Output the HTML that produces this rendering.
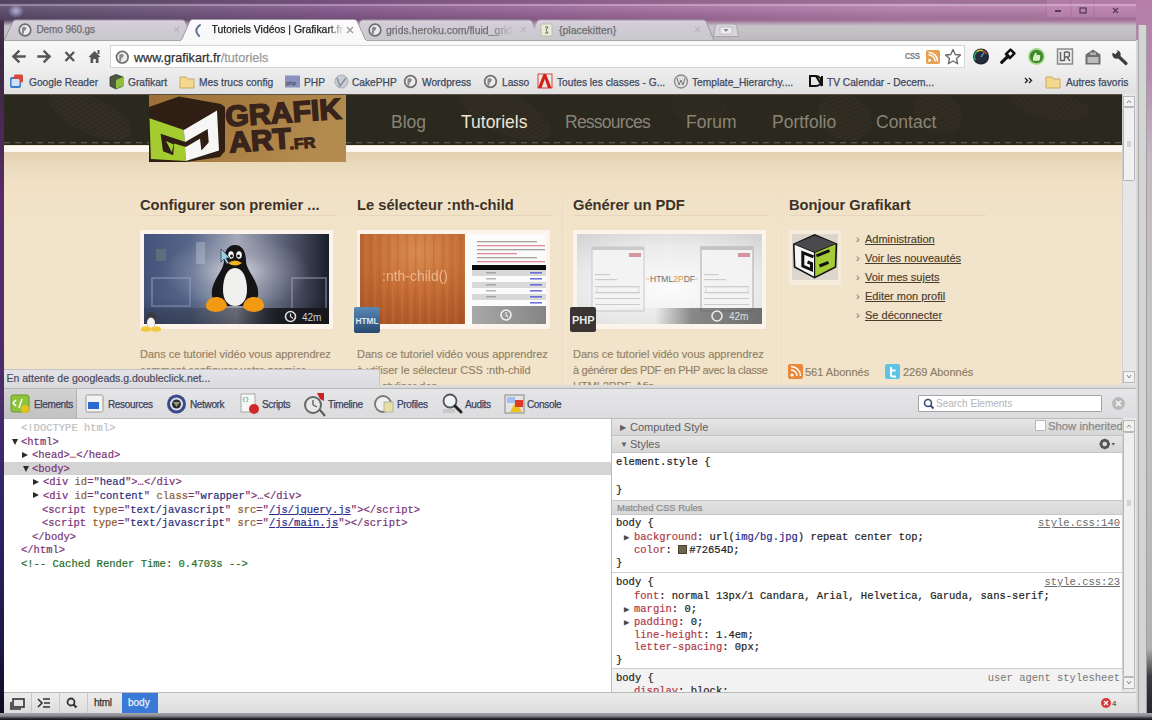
<!DOCTYPE html>
<html><head><meta charset="utf-8">
<style>
*{box-sizing:border-box;margin:0;padding:0}
html,body{width:1152px;height:720px;overflow:hidden;background:#6a4a72;font-family:"Liberation Sans",sans-serif}
.a{position:absolute}
#frame{left:0;top:0;width:1152px;height:720px;background:linear-gradient(180deg,rgba(0,0,0,.1) 0,rgba(0,0,0,.1) 3px,rgba(255,255,255,.1) 5px,rgba(255,255,255,.04) 9px,rgba(0,0,0,.1) 18px,rgba(0,0,0,.1) 20px),linear-gradient(90deg,#5c4c6c 0%,#6a5478 12%,#82588a 28%,#a06c9c 55%,#b27eaa 78%,#b47ea8 100%)}
#topline{left:0;top:4px;width:1152px;height:1.5px;background:rgba(255,240,255,.28)}
#tabstrip{left:4px;top:20px;width:1132px;height:20px;background:linear-gradient(180deg,rgba(200,190,200,0) 0%,#c9c3c9 30%,#c4c2c4 60%,#bbb9bb 100%)}
.tab{height:21px;top:19px;background:linear-gradient(#d8d6dc,#c9c7cd);border:1px solid #a8a2a8;border-bottom:none;border-radius:4px 4px 0 0;font-size:11px;color:#555;}
#toolbar{left:4px;top:40px;width:1132px;height:28px;background:linear-gradient(#fbfbfb,#f1f1f1);border-top:1px solid #bdbdbd}
#bookmarks{left:4px;top:68px;width:1132px;height:26px;background:linear-gradient(#f1f1f1,#e9e9e9)}
#page{left:4px;top:94px;width:1118px;height:291px;background:#f2e4ca;overflow:hidden}
#pscroll{left:1122px;top:94px;width:14px;height:294px;background:#ededed;border-left:1px solid #d0d0d0}
#rframe{display:none}
#status{z-index:5;left:4px;top:369px;width:376px;height:17px;background:linear-gradient(#e4e4e8,#dcdce0);border:1px solid #c4c4c8;border-left:none;border-bottom:none;font-size:10.5px;line-height:12px;color:#4a4a58;padding:2px 0 0 2.5px;white-space:nowrap;-webkit-text-stroke:0.2px currentColor}
#dtbar{left:4px;top:385px;width:1132px;height:33px;background:linear-gradient(#dedede 0,#d8d8d8 3px,#b8b8b8 3px,#b8b8b8 4px,#e6e6e8 4px,#dcdcde 100%)}
#elements{left:4px;top:418px;width:607px;height:274px;background:#fff;border-top:1px solid #bcbcbc}
#sidebar{left:611px;top:418px;width:511px;height:274px;background:#fff;border-left:1px solid #bcbcbc;border-top:1px solid #bcbcbc}
#dscroll{left:1122px;top:418px;width:14px;height:274px;background:#ececec;border-left:1px solid #cfcfcf}
#dstatus{left:4px;top:692px;width:1132px;height:22px;background:linear-gradient(#ececec,#dcdcdc);border-top:1px solid #b8b8b8}
#bottom{left:0;top:713px;width:1152px;height:7px;background:linear-gradient(#a4a4aa 0,#8a8a92 3px,#3a3a40 5px,#0e0e14 7px)}
.ui{white-space:nowrap;line-height:1;-webkit-text-stroke:0.25px currentColor}
.bm{top:77.5px;font-size:10.2px;color:#3e4862}
.nav{top:112.3px;font-size:17.5px;line-height:20px;color:#8a8478;white-space:nowrap}
.h2{top:196px;font-size:14.7px;line-height:18px;font-weight:bold;color:#3c3228;white-space:nowrap}
.uline{top:215px;height:1px;background:#e6d6be}
.frame{top:230px;width:193px;height:99px;background:#fcf4ea;box-shadow:0 0 1px #e8dcc8}
.ptxt{top:345.5px;font-size:11px;line-height:16px;color:#918066;white-space:nowrap;-webkit-text-stroke:0.15px currentColor}
.slink{left:856px;font-size:11px;line-height:14px;color:#4a3c2c;white-space:nowrap;-webkit-text-stroke:0.15px currentColor}
.slink::before{content:"›";position:absolute;left:0;color:#8a7c6c}
.slink{padding-left:9px;text-decoration:underline}
.dtl{top:399px;font-size:10px;line-height:12px;color:#3a4262;white-space:nowrap;letter-spacing:-0.35px;-webkit-text-stroke:0.25px currentColor}
.el{line-height:13px;color:#7a3276;-webkit-text-stroke:0.2px currentColor}
.tri{display:inline-block;width:11px;height:8px;position:relative;vertical-align:0}.tri::after{content:"";position:absolute;width:0;height:0}.td::after{left:1.6px;top:2px;border-left:3.4px solid transparent;border-right:3.4px solid transparent;border-top:6.4px solid #2a2a2a}.tr::after{left:1.2px;top:1.6px;border-top:3.4px solid transparent;border-bottom:3.4px solid transparent;border-left:6px solid #2a2a2a}
.tg{color:#7a3276}.an{color:#8e5a2c}.av{color:#2c2c7a}.lk{color:#2c2c8a;text-decoration:underline}
.shdr{left:612px;width:510px;height:17px;background:linear-gradient(#e6e6e6,#d6d6d6);border-bottom:1px solid #c4c4c4;font-size:11px;line-height:16px;color:#606060;padding-left:8px;white-space:nowrap}
.stri{font-size:8px;color:#606060;display:inline-block;width:10px;vertical-align:1px}
.stri2{font-size:8.5px;color:#444;display:inline-block;width:10px;vertical-align:0px}
.sl{left:616px;line-height:13px;color:#222;-webkit-text-stroke:0.2px currentColor}
.sl2{line-height:13px}
.pn{color:#b03a48}
.mono{font-family:"Liberation Mono",monospace;font-size:10.5px;white-space:pre}
#wrap{position:absolute;left:0;top:0;width:1152px;height:720px}</style></head><body><div id="wrap">
<div id="frame" class="a"></div>
<div class="a" style="left:0;top:20px;width:4px;height:700px;background:linear-gradient(180deg,#4a3050 0,#3a2840 30px,#582c68 180px,#4a2c6a 380px,#2c2462 500px,#1c1a48 620px,#0a0a20 700px)"></div>
<div class="a" style="left:4px;top:40px;width:1px;height:674px;background:rgba(255,245,250,.7)"></div>
<svg class="a" style="left:1040px;top:0" width="112" height="20">
 <rect x="6.5" y="-1" width="90" height="18.5" fill="#c48ab8" opacity="0.45" stroke="#9a6090" stroke-opacity="0.5"/>
 <line x1="31" y1="0" x2="31" y2="17" stroke="#a06a98" stroke-opacity="0.5"/>
 <line x1="54" y1="0" x2="54" y2="17" stroke="#a06a98" stroke-opacity="0.5"/>
 <rect x="15" y="10" width="6" height="2" fill="#5a3a58"/>
 <rect x="40" y="8" width="6" height="5" fill="none" stroke="#5a3a58" stroke-width="1.3"/>
 <path d="M73,8 L78,13 M78,8 L73,13" stroke="#5a3a58" stroke-width="1.4"/>
 <line x1="99.5" y1="0" x2="99.5" y2="40" stroke="#e0b0d8" stroke-opacity="0.5"/>
</svg>
<div id="topline" class="a"></div>
<div class="a" style="left:8px;top:4px;width:16px;height:14px;background:radial-gradient(ellipse at center,rgba(200,210,240,.75) 0,rgba(180,190,230,.35) 45%,rgba(180,190,230,0) 70%)"></div>
<div id="tabstrip" class="a"></div>
<svg class="a" style="left:0;top:0" width="1152" height="94" viewBox="0 0 1152 94">
 <defs>
  <linearGradient id="tinact" x1="0" y1="0" x2="0" y2="1"><stop offset="0" stop-color="#dcd2e0"/><stop offset="0.25" stop-color="#d2ccd6"/><stop offset="1" stop-color="#c8c8cc"/></linearGradient>
  <linearGradient id="tact" x1="0" y1="0" x2="0" y2="1"><stop offset="0" stop-color="#fdfafd"/><stop offset="1" stop-color="#f8f8f8"/></linearGradient>
  <linearGradient id="strip" x1="0" y1="0" x2="0" y2="1"><stop offset="0" stop-color="#000" stop-opacity="0"/><stop offset="1" stop-color="#cfcdd0" stop-opacity="0.0"/></linearGradient>
 </defs>
 <!-- tab 4 -->
 <path d="M529,40.5 L537,21.5 Q538,20 540,20 L703,20 Q705,20 706,21.5 L714,40.5 Z" fill="url(#tinact)" stroke="#9c98a0" stroke-width="1"/>
 <!-- tab 3 -->
 <path d="M352,40.5 L360,21.5 Q361,20 363,20 L529,20 Q531,20 532,21.5 L540,40.5 Z" fill="url(#tinact)" stroke="#9c98a0" stroke-width="1"/>
 <path d="M529.5,40 L537.5,21.5 Q538.5,20.5 540,20.5 L560,20.5 L560,40 Z" fill="url(#tinact)"/>
 <!-- tab 1 -->
 <path d="M4,40.5 L13,21.5 Q14,20 16,20 L182,20 Q184,20 185,21.5 L194,40.5 Z" fill="url(#tinact)" stroke="#9c98a0" stroke-width="1"/>
 <!-- new tab -->
 <path d="M713.5,36.5 L715.5,25.5 Q716,24 718,24 L734,24 Q736,24 736.5,25.5 L738.5,36.5 Z" fill="#d8d6da" stroke="#a8a4aa" stroke-width="1"/>
 <rect x="720" y="27" width="12" height="7" rx="1" fill="#ecebee" stroke="#b8b4ba" stroke-width="0.8"/>
 <path d="M723.5,29 L728.5,29 L726,32 Z" fill="#8a8a8e"/>
 <!-- active tab -->
 <path d="M181,41 L190,21 Q191,19.5 193,19.5 L354,19.5 Q356,19.5 357,21 L366,41 Z" fill="url(#tact)" stroke="#a09aa2" stroke-width="1"/>
 <!-- toolbar -->
 <rect x="4" y="40" width="1132" height="54" fill="url(#bmg)"/>
 <linearGradient id="bmg" x1="0" y1="0" x2="0" y2="1"><stop offset="0" stop-color="#f8f8f8"/><stop offset="0.5" stop-color="#efefef"/><stop offset="1" stop-color="#e0e0e0"/></linearGradient>
 <line x1="4" y1="40.5" x2="181" y2="40.5" stroke="#a8a6aa"/>
 <line x1="366" y1="40.5" x2="1136" y2="40.5" stroke="#a8a6aa"/>
 
 <linearGradient id="tb" x1="0" y1="0" x2="0" y2="1"><stop offset="0" stop-color="#fbfbfb"/><stop offset="1" stop-color="#f1f1f1"/></linearGradient>
 <rect x="182" y="40" width="183" height="2" fill="#fbfbfb"/>
 <!-- favicons tabs -->
 <circle cx="25" cy="30" r="5.8" fill="#ececec" stroke="#6e6e6e" stroke-width="1.7"/><path d="M22,27.5 q2.5,-1.5 4.5,0.5 q-0.5,2.5 -2.5,3 q0.5,2 -1,3.5 q-2,-1.5 -1,-4 z" fill="#8a8a8a"/>
 <path d="M200,25 Q193,30 199,36" fill="none" stroke="#5a7090" stroke-width="2" stroke-linecap="round"/>
 <circle cx="375" cy="30" r="5.8" fill="#ececec" stroke="#6e6e6e" stroke-width="1.7"/><path d="M372,27.5 q2.5,-1.5 4.5,0.5 q-0.5,2.5 -2.5,3 q0.5,2 -1,3.5 q-2,-1.5 -1,-4 z" fill="#8a8a8a"/>
 <rect x="541" y="24" width="11" height="12" fill="#e8ecd8" stroke="#b4b89c" stroke-width="0.8"/>
 <path d="M545,27 L548,27 L546,30 L548,33 L545,33" fill="none" stroke="#666" stroke-width="1"/>
 <!-- close x's -->
 <path d="M347,27 L353,33 M353,27 L347,33" stroke="#9a9a9a" stroke-width="1.3"/>
 <path d="M174,27 L179,32 M179,27 L174,32" stroke="#b8b8bc" stroke-width="1.1"/>
 <path d="M521,27 L526,32 M526,27 L521,32" stroke="#b8b8bc" stroke-width="1.1"/>
 <path d="M695,27 L700,32 M700,27 L695,32" stroke="#b8b8bc" stroke-width="1.1"/>
 <!-- nav icons -->
 <path d="M24.5,56.5 L13.5,56.5 M18.5,51.5 L13.5,56.5 L18.5,61.5" fill="none" stroke="#555" stroke-width="2.4" stroke-linecap="square"/>
 <path d="M38.5,56.5 L49.5,56.5 M44.5,51.5 L49.5,56.5 L44.5,61.5" fill="none" stroke="#555" stroke-width="2.4" stroke-linecap="square"/>
 <path d="M65.5,52 L74,61 M74,52 L65.5,61" fill="none" stroke="#555" stroke-width="2.4"/>
 <path d="M88.5,57 L94.5,51 L100.5,57 L98.5,57 L98.5,63 L95.8,63 L95.8,59 L93.2,59 L93.2,63 L90.5,63 L90.5,57 Z" fill="#555"/>
 <rect x="97.5" y="50" width="2" height="4" fill="#555"/>
 <!-- address bar -->
 <rect x="110.5" y="45.5" width="854" height="22" fill="#fff" stroke="#d4d4d4" stroke-width="1"/>
 <circle cx="122.3" cy="57.2" r="5.8" fill="#ececec" stroke="#6e6e6e" stroke-width="1.7"/><path d="M119.3,54.7 q2.5,-1.5 4.5,0.5 q-0.5,2.5 -2.5,3 q0.5,2 -1,3.5 q-2,-1.5 -1,-4 z" fill="#8a8a8a"/>
 <!-- rss in bar -->
 <rect x="926" y="50" width="14" height="14" rx="2" fill="#e8a050"/>
 <circle cx="929.5" cy="60.5" r="1.4" fill="#fff"/>
 <path d="M928.5,55 A6,6 0 0 1 935,61.5 M928.5,52.5 A8.5,8.5 0 0 1 937.5,61.5" fill="none" stroke="#fff" stroke-width="1.4"/>
 <path d="M953,49.5 L955.3,54.5 L960.5,55 L956.5,58.5 L957.7,63.8 L953,61 L948.3,63.8 L949.5,58.5 L945.5,55 L950.7,54.5 Z" fill="none" stroke="#666" stroke-width="1.3" stroke-linejoin="round"/>
 <!-- extension icons -->
 <circle cx="981" cy="56.5" r="8" fill="#1c2230"/>
 <circle cx="981" cy="56.5" r="6.6" fill="#252c3c"/>
 <path d="M975.5,60 A6,6 0 0 1 977,51.5" fill="none" stroke="#30a060" stroke-width="1.6"/>
 <path d="M977,51.5 A6,6 0 0 1 983,50.8" fill="none" stroke="#e0c030" stroke-width="1.6"/>
 <path d="M983,50.8 A6,6 0 0 1 986.5,54" fill="none" stroke="#d04030" stroke-width="1.6"/>
 <path d="M981,57 L984,52.5" stroke="#40b0e0" stroke-width="1.3"/>
 <g transform="rotate(-45 1007 57)">
  <rect x="998" y="55.5" width="10" height="3.2" rx="1" fill="#111"/>
  <rect x="1007" y="53" width="9" height="8" rx="1.2" fill="#111"/>
  <rect x="1010" y="55.5" width="3.5" height="3" fill="#f0f0f0"/>
 </g>
 <circle cx="1036.5" cy="56.5" r="8.5" fill="#8ccc6c" opacity="0.7"/>
 <circle cx="1036.5" cy="56.5" r="6.8" fill="#3e8a2a"/>
 <path d="M1033,57.5 L1035,53 Q1036,52 1036.5,53 L1036.5,55 L1039.5,55 Q1040.5,55 1040.3,56 L1039.7,60 Q1039.5,60.8 1038.7,60.8 L1033,60.8 Z" fill="#d8f0c8"/>
 <rect x="1057.5" y="49" width="15" height="15" fill="#ececec" stroke="#8a8a8a" stroke-width="1.5"/>
 <path d="M1060.5,52 L1060.5,60.5 L1064,60.5 M1064.5,52 L1064.5,61 M1064.5,52 L1067.5,52 Q1069.5,52 1069.5,54.5 Q1069.5,57 1067.5,57 L1064.5,57 M1067,57 L1070,61" fill="none" stroke="#606060" stroke-width="1.4"/>
 <path d="M1085.5,54.5 L1093,49.5 L1100.5,54.5 L1100.5,64.5 L1085.5,64.5 Z" fill="#6e6e6e"/>
 <rect x="1087.5" y="57" width="11" height="6" fill="#bcbcbc"/>
 <rect x="1090" y="52.5" width="6" height="2.5" fill="#b0b0b0"/>
 <path d="M1118,56 L1126,63.5" stroke="#3e3e3e" stroke-width="3.2" stroke-linecap="round"/>
 <circle cx="1116.5" cy="54.5" r="4.2" fill="#3e3e3e"/>
 <path d="M1111.5,52 L1115.5,54.2 L1117.8,51.2 L1114.5,48.5 Z" fill="#f3f3f3"/>
 <!-- bookmark icons -->
 <rect x="10" y="77" width="11" height="11" rx="2" fill="#3a7cc8"/>
 <rect x="14" y="74.5" width="9" height="8" rx="1.5" fill="#d64a3a"/>
 <rect x="11.5" y="79" width="8" height="7" rx="1" fill="#cfe0f4"/>
 <path d="M110,77 L116,74.5 L123,77 L123,86 L116,89 L110,86 Z" fill="#4a5a40" stroke="#333" stroke-width="0.8"/>
 <path d="M116,80 L123,77 L123,86 L116,89 Z" fill="#8fbf3a"/>
 <path d="M180,77 L186,77 L188,79 L194,79 L194,88 L180,88 Z" fill="#f4d890" stroke="#c8a860" stroke-width="1"/>
 <rect x="285" y="75.5" width="15" height="12" fill="#8a90c0"/>
 <text x="286" y="85" font-family="Liberation Sans" font-size="6" fill="#333">php</text>
 <circle cx="341.5" cy="81.5" r="6.5" fill="#c8ccd4" stroke="#aab0ba" stroke-width="1"/>
 <path d="M337,78 L340,86 L346,78" fill="none" stroke="#8890a0" stroke-width="1.5"/>
 <circle cx="410.5" cy="81.5" r="5.8" fill="#ececec" stroke="#6e6e6e" stroke-width="1.7"/><path d="M407.5,79.0 q2.5,-1.5 4.5,0.5 q-0.5,2.5 -2.5,3 q0.5,2 -1,3.5 q-2,-1.5 -1,-4 z" fill="#8a8a8a"/>
 <circle cx="490.5" cy="81.5" r="5.8" fill="#ececec" stroke="#6e6e6e" stroke-width="1.7"/><path d="M487.5,79.0 q2.5,-1.5 4.5,0.5 q-0.5,2.5 -2.5,3 q0.5,2 -1,3.5 q-2,-1.5 -1,-4 z" fill="#8a8a8a"/>
 <path d="M538,88 L543.5,74 L546,74 L551.5,88 L548,88 L544.8,79 L541.5,88 Z" fill="#d42018"/>
 <rect x="538" y="74" width="14" height="14" fill="none" stroke="#d42018" stroke-width="0.8"/>
 <circle cx="681" cy="81.5" r="6.5" fill="#e0e0e0" stroke="#888" stroke-width="1.3"/>
 <path d="M677,78 L679,85 L681,80 L683,85 L685,78" fill="none" stroke="#777" stroke-width="1"/>
 <path d="M810,76 L816,76 A5,5 0 0 1 816,86 L810,86 Z M816,76 L822,86 M822,76 L822,86" fill="none" stroke="#111" stroke-width="2"/>
 <path d="M1025,78 L1027.5,80.5 L1025,83 M1029,78 L1031.5,80.5 L1029,83" fill="none" stroke="#222" stroke-width="1.4"/>
 <path d="M1046,77 L1052,77 L1054,79 L1060,79 L1060,88 L1046,88 Z" fill="#f4d890" stroke="#c8a860" stroke-width="1"/>
</svg>
<div class="a ui" style="left:36.5px;top:25.3px;font-size:10px;color:#6e6e70;letter-spacing:-0.1px">Demo 960.gs</div>
<div class="a ui" style="left:211.5px;top:25px;font-size:10.4px;color:#222;width:132px;overflow:hidden;-webkit-mask-image:linear-gradient(90deg,#000 88%,transparent)">Tutoriels Vidéos | Grafikart.fr</div>
<div class="a ui" style="left:386px;top:25px;font-size:10.5px;color:#6e6e70;width:128px;overflow:hidden;-webkit-mask-image:linear-gradient(90deg,#000 80%,transparent)">grids.heroku.com/fluid_grid</div>
<div class="a ui" style="left:559px;top:25px;font-size:10.5px;color:#6e6e70">{placekitten}</div>
<div class="a ui" style="left:134px;top:52px;font-size:12.6px;color:#333">www.grafikart.fr<span style="color:#999">/tutoriels</span></div>
<div class="a ui" style="left:905px;top:51px;font-size:10px;color:#777">css</div>
<div class="a ui bm" style="left:29px">Google Reader</div>
<div class="a ui bm" style="left:128px">Grafikart</div>
<div class="a ui bm" style="left:199px">Mes trucs config</div>
<div class="a ui bm" style="left:304px">PHP</div>
<div class="a ui bm" style="left:352px">CakePHP</div>
<div class="a ui bm" style="left:422px">Wordpress</div>
<div class="a ui bm" style="left:502px">Lasso</div>
<div class="a ui bm" style="left:557px">Toutes les classes - G...</div>
<div class="a ui bm" style="left:692px">Template_Hierarchy....</div>
<div class="a ui bm" style="left:827px">TV Calendar - Decem...</div>
<div class="a ui bm" style="left:1066px">Autres favoris</div>

<div id="page" class="a"><div class="a" style="left:-4px;top:-94px;width:1152px;height:720px">
 <div class="a" style="left:0;top:95px;width:1152px;height:50px;background:#2b281e"></div>
 <div class="a" style="left:0;top:94px;width:1152px;height:1px;background:#5a5248"></div>
 <svg class="a" style="left:0;top:95px" width="1152" height="50">
  <defs><pattern id="hatch" width="4" height="4" patternUnits="userSpaceOnUse" patternTransform="rotate(35)"><rect width="4" height="4" fill="#2f2b22"/><rect width="1.5" height="4" fill="#3c362a"/></pattern></defs>
  <ellipse cx="90" cy="20" rx="45" ry="18" fill="url(#hatch)" opacity="0.6" transform="rotate(25 90 20)"/>
  <ellipse cx="505" cy="18" rx="50" ry="20" fill="url(#hatch)" opacity="0.5" transform="rotate(25 505 18)"/>
  <ellipse cx="845" cy="22" rx="28" ry="22" fill="url(#hatch)" opacity="0.55" transform="rotate(30 845 22)"/>
  <ellipse cx="938" cy="18" rx="25" ry="20" fill="url(#hatch)" opacity="0.45" transform="rotate(30 938 18)"/>
  <ellipse cx="1050" cy="10" rx="40" ry="14" fill="url(#hatch)" opacity="0.45" transform="rotate(10 1050 10)"/>
  <ellipse cx="700" cy="14" rx="30" ry="18" fill="url(#hatch)" opacity="0.35" transform="rotate(20 700 14)"/>
  <line x1="4" y1="47.8" x2="1122" y2="47.8" stroke="#6a6458" stroke-width="1.1" stroke-dasharray="6 5"/>
 </svg>
 <div class="a" style="left:0;top:145.5px;width:1152px;height:6.5px;background:linear-gradient(#fffdf8,#fbf6ee)"></div>
 <div class="a" style="left:0;top:152px;width:1152px;height:240px;background:linear-gradient(#e4cfb0,#eadabd 12px,#f0e1c5 32px,#f2e4ca 90px)"></div>
 <!-- logo -->
 <svg class="a" style="left:149px;top:95px" width="197" height="67" viewBox="0 0 197 67">
  <defs><linearGradient id="lg" x1="0" y1="0" x2="1" y2="0.3"><stop offset="0" stop-color="#9c7038"/><stop offset="0.5" stop-color="#a87c40"/><stop offset="1" stop-color="#b48c50"/></linearGradient></defs>
  <rect width="197" height="67" fill="url(#lg)"/>
  <polygon points="0,12 30,1.5 72,9 76,12 76,56 71,62 37,67 0,67" fill="#2e1e14"/>
  <polygon points="0.5,23.3 34.9,35 36.9,66 1.9,64" fill="#a4cc30"/>
  <polygon points="34.9,35 68,15.5 70,55.4 36.9,66" fill="#f6f6f4"/>
  <polygon points="11.6,38.8 36.4,47.1 36.9,52 25.2,48.6 24.2,60.2 14,56.3" fill="#2e1e14"/>
  <polygon points="17,46.1 24.7,49.5 22.8,57.3" fill="#a4cc30"/>
  <polygon points="35.4,47.6 58.7,34 59.7,47.6 52.4,55.4 51,43.7 36.9,52" fill="#2e1e14"/>
  <g transform="rotate(-4 100 30)" fill="#38241a" stroke="#38241a" stroke-width="1.6" stroke-linejoin="miter">
   <text x="77" y="30" font-family="Liberation Sans" font-weight="bold" font-size="29" textLength="116" lengthAdjust="spacingAndGlyphs">GRAFIK</text>
   <text x="79" y="56" font-family="Liberation Sans" font-weight="bold" font-size="29" textLength="62" lengthAdjust="spacingAndGlyphs">ART</text>
   <text x="139" y="57" font-family="Liberation Sans" font-weight="bold" font-size="15" stroke-width="1" textLength="26" lengthAdjust="spacingAndGlyphs">.FR</text>
  </g>
 </svg>
 <div class="a nav" style="left:391px">Blog</div>
 <div class="a nav" style="left:461px;color:#ece4d6">Tutoriels</div>
 <div class="a nav" style="left:565px;letter-spacing:-0.75px">Ressources</div>
 <div class="a nav" style="left:686px">Forum</div>
 <div class="a nav" style="left:772px">Portfolio</div>
 <div class="a nav" style="left:876px">Contact</div>
 <!-- columns -->
 <div class="a h2" style="left:140px">Configurer son premier ...</div>
 <div class="a h2" style="left:357px">Le sélecteur :nth-child</div>
 <div class="a h2" style="left:573px">Générer un PDF</div>
 <div class="a h2" style="left:789px">Bonjour Grafikart</div>
 <div class="a uline" style="left:140px;width:196px"></div>
 <div class="a uline" style="left:357px;width:196px"></div>
 <div class="a uline" style="left:573px;width:196px"></div>
 <div class="a uline" style="left:789px;width:197px"></div>
 <div class="a" style="left:562px;top:190px;width:1px;height:200px;background:#eadcc6"></div>
 <div class="a" style="left:781px;top:190px;width:1px;height:200px;background:#ecdfca"></div>
 <div class="a frame" style="left:140px"></div>
 <div class="a frame" style="left:357px"></div>
 <div class="a frame" style="left:573px"></div>
 <!-- image 1: tux -->
 <svg class="a" style="left:144px;top:234px" width="185" height="90" viewBox="0 0 185 90">
  <defs>
   <linearGradient id="tuxh" x1="0" y1="0" x2="1" y2="0"><stop offset="0" stop-color="#44527a"/><stop offset="0.25" stop-color="#56668a"/><stop offset="0.5" stop-color="#a4a8b8"/><stop offset="0.72" stop-color="#646a80"/><stop offset="1" stop-color="#1a1e2a"/></linearGradient>
   <radialGradient id="tuxglow" cx="0.5" cy="0.42" r="0.4"><stop offset="0" stop-color="#dcdee6" stop-opacity="0.9"/><stop offset="0.55" stop-color="#aeb2c0" stop-opacity="0.35"/><stop offset="1" stop-color="#aeb2c0" stop-opacity="0"/></radialGradient>
   <linearGradient id="tuxbar" x1="0" y1="0" x2="1" y2="0"><stop offset="0" stop-color="#1c1e26" stop-opacity="0.1"/><stop offset="0.5" stop-color="#1c1e26" stop-opacity="0.35"/><stop offset="0.72" stop-color="#15161c" stop-opacity="0.9"/><stop offset="1" stop-color="#15161c" stop-opacity="0.95"/></linearGradient>
   <linearGradient id="tuxv" x1="0" y1="0" x2="0" y2="1"><stop offset="0" stop-color="#000" stop-opacity="0"/><stop offset="0.7" stop-color="#000" stop-opacity="0"/><stop offset="1" stop-color="#000" stop-opacity="0.25"/></linearGradient>
  </defs>
  <rect width="185" height="90" fill="url(#tuxh)"/>
  <rect width="185" height="90" fill="url(#tuxglow)"/>
  <g opacity="0.45" fill="none" stroke="#9aa6c4" stroke-width="2">
   <rect x="8" y="44" width="38" height="28"/>
   <rect x="148" y="44" width="34" height="36" stroke="#a0a8c0"/>
  </g>
  <rect x="52" y="8" width="9" height="22" fill="#c8d0e0" opacity="0.35"/>
  <rect x="12" y="15" width="10" height="12" fill="#8aa070" opacity="0.3"/>
  <rect width="185" height="90" fill="url(#tuxv)"/>
  <rect x="0" y="74" width="185" height="16" fill="url(#tuxbar)"/>
  <!-- penguin -->
  <path d="M91,11 C83,11 80,19 80,27 C80,33 75,39 71,47 C66,57 67,66 73,72 L109,72 C115,66 116,57 111,47 C107,39 102,33 102,27 C102,19 99,11 91,11 Z" fill="#141414"/>
  <path d="M91,34 C83,34 79,44 79,56 C79,66 84,72 91,72 C98,72 103,66 103,56 C103,44 99,34 91,34 Z" fill="#f0f0ee"/>
  <ellipse cx="87" cy="21" rx="2.8" ry="3.8" fill="#fff"/><ellipse cx="95" cy="21" rx="2.8" ry="3.8" fill="#fff"/>
  <circle cx="87.5" cy="22" r="1.4" fill="#111"/><circle cx="94.5" cy="22" r="1.4" fill="#111"/>
  <path d="M84,29 Q91,24 98,29 Q91,34 84,29 Z" fill="#f0b420"/>
  <path d="M62,71 Q64,62 74,63 Q82,65 83,72 Q82,77 72,78 Q61,77 62,71 Z" fill="#f29a14"/>
  <path d="M120,71 Q118,62 108,63 Q100,65 99,72 Q100,77 110,78 Q121,77 120,71 Z" fill="#f29a14"/>
  <path d="M77,15 L77,28 L80,25 L83,30 L85,29 L82,24 L86,24 Z" fill="#9ad0e8" stroke="#3a4050" stroke-width="0.8"/>
  <circle cx="146.5" cy="82.5" r="5" fill="none" stroke="#ddd" stroke-width="1.6"/>
  <path d="M146.5,79.5 L146.5,82.5 L149,84.5" fill="none" stroke="#ddd" stroke-width="1.2"/>
  <text x="158" y="86.5" font-family="Liberation Sans" font-size="10" fill="#d0d0d0">42m</text>
 </svg>
 <svg class="a" style="left:141px;top:308px" width="20" height="24" viewBox="0 0 20 24">
  <ellipse cx="10" cy="12" rx="5" ry="8" fill="#3a3a3a" opacity="0.9"/><ellipse cx="10" cy="15" rx="4" ry="5.5" fill="#f4f4f4"/>
  <ellipse cx="5" cy="21" rx="5" ry="2.8" fill="#f0c838"/><ellipse cx="15" cy="21" rx="5" ry="2.8" fill="#f0c838"/>
 </svg>
 <!-- image 2: wood -->
 <svg class="a" style="left:360px;top:234px" width="186" height="90" viewBox="0 0 186 90">
  <defs>
   <radialGradient id="wood" cx="0.55" cy="0.2" r="0.9"><stop offset="0" stop-color="#d88c50"/><stop offset="0.5" stop-color="#c46c34"/><stop offset="1" stop-color="#a85226"/></radialGradient>
   <pattern id="grain" width="9" height="90" patternUnits="userSpaceOnUse"><rect x="1" width="1.5" height="90" fill="#9a4818" opacity="0.22"/><rect x="5" width="2" height="90" fill="#e09060" opacity="0.15"/></pattern>
   <linearGradient id="sbar" x1="0" y1="0" x2="1" y2="0"><stop offset="0" stop-color="#9a9a9a"/><stop offset="1" stop-color="#707070"/></linearGradient>
  </defs>
  <rect width="186" height="90" fill="#fbfbfb"/>
  <rect width="105" height="90" fill="url(#wood)"/>
  <rect width="105" height="90" fill="url(#grain)"/>
  <text x="22" y="47" font-family="Liberation Sans" font-size="14" fill="#f0c8a4" opacity="0.8" textLength="66" lengthAdjust="spacingAndGlyphs">:nth-child()</text>
  <g opacity="0.55">
   <rect x="117" y="7" width="60" height="1.3" fill="#555"/>
   <rect x="117" y="11" width="68" height="1.3" fill="#d03050"/>
   <rect x="117" y="15" width="68" height="1.3" fill="#555"/>
   <rect x="117" y="19" width="40" height="1.3" fill="#d03050"/>
   <rect x="117" y="23" width="60" height="1.3" fill="#555"/>
   <rect x="117" y="27" width="68" height="1.3" fill="#d03050"/>
  </g>
  <rect x="112" y="31" width="74" height="5" fill="#0a0a0a"/>
  <rect x="112" y="36" width="74" height="6" fill="#d8d8d8"/>
  <rect x="112" y="48" width="74" height="6" fill="#d8d8d8"/>
  <rect x="112" y="60" width="74" height="6" fill="#d8d8d8"/>
  <g fill="#4848d8" opacity="0.75"><rect x="170" y="38" width="12" height="1.6"/><rect x="170" y="44" width="12" height="1.6"/><rect x="170" y="50" width="12" height="1.6"/><rect x="170" y="56" width="12" height="1.6"/><rect x="170" y="62" width="12" height="1.6"/><rect x="170" y="68" width="12" height="1.6"/></g>
  <g fill="#666" opacity="0.45"><rect x="126" y="38" width="10" height="1.5"/><rect x="126" y="44" width="10" height="1.5"/><rect x="126" y="50" width="10" height="1.5"/><rect x="126" y="56" width="10" height="1.5"/><rect x="126" y="62" width="10" height="1.5"/></g>
  <rect x="112" y="72" width="74" height="18" fill="url(#sbar)" opacity="0.85"/>
  <circle cx="146" cy="81" r="5" fill="none" stroke="#f0f0f0" stroke-width="1.6"/>
  <path d="M146,78 L146,81 L148,83" fill="none" stroke="#f0f0f0" stroke-width="1.1"/>
 </svg>
 <svg class="a" style="left:354px;top:307px" width="26" height="26"><defs><linearGradient id="htmlg" x1="0" y1="0" x2="0" y2="1"><stop offset="0" stop-color="#5a88b8"/><stop offset="1" stop-color="#284870"/></linearGradient></defs><rect width="26" height="26" rx="2" fill="url(#htmlg)"/><text x="1.5" y="17" font-family="Liberation Sans" font-weight="bold" font-size="8.5" fill="#d8e8f4" textLength="23" lengthAdjust="spacingAndGlyphs">HTML</text></svg>
 <!-- image 3: pdf -->
 <svg class="a" style="left:577px;top:234px" width="185" height="90" viewBox="0 0 185 90">
  <defs><radialGradient id="pdfbg" cx="0.5" cy="0.6" r="0.75"><stop offset="0" stop-color="#fcfcfc"/><stop offset="0.6" stop-color="#ececec"/><stop offset="1" stop-color="#d4d4d6"/></radialGradient>
  <linearGradient id="pdfbar" x1="0" y1="0" x2="1" y2="0"><stop offset="0" stop-color="#666" stop-opacity="0"/><stop offset="0.42" stop-color="#666" stop-opacity="0.05"/><stop offset="0.62" stop-color="#666" stop-opacity="0.75"/><stop offset="1" stop-color="#5a5a5a" stop-opacity="0.85"/></linearGradient></defs>
  <rect width="185" height="90" fill="url(#pdfbg)"/>
  <g opacity="0.9">
  <rect x="15" y="13" width="52" height="64" fill="#f4f4f4" stroke="#c4c4c4" stroke-width="1"/>
  <rect x="15" y="13" width="52" height="3" fill="#c8c8c8"/>
  <rect x="52" y="19" width="12" height="4" fill="#c86070" opacity="0.7"/>
  <g fill="#c8c8c8"><rect x="18" y="40" width="15" height="1.2"/><rect x="18" y="45" width="22" height="1.2"/><rect x="18" y="52" width="45" height="1"/><rect x="18" y="58" width="45" height="1"/><rect x="18" y="64" width="45" height="1"/><rect x="18" y="70" width="45" height="1"/></g>
  <rect x="20" y="53" width="42" height="6" fill="none" stroke="#d0d0d0" stroke-width="0.8"/>
  <rect x="124" y="13" width="52" height="64" fill="#f4f4f4" stroke="#b0b0b0" stroke-width="1.2"/>
  <rect x="124" y="13" width="52" height="3" fill="#c0c0c0"/>
  <rect x="161" y="19" width="12" height="4" fill="#c86070" opacity="0.7"/>
  <g fill="#c8c8c8"><rect x="127" y="40" width="15" height="1.2"/><rect x="127" y="45" width="22" height="1.2"/><rect x="127" y="52" width="45" height="1"/><rect x="127" y="58" width="45" height="1"/><rect x="127" y="64" width="45" height="1"/><rect x="127" y="70" width="45" height="1"/></g>
  <rect x="129" y="53" width="42" height="6" fill="none" stroke="#d0d0d0" stroke-width="0.8"/>
  </g>
  <line x1="69" y1="45" x2="121" y2="45" stroke="#e8b080" stroke-width="0.8"/>
  <rect x="72" y="40" width="46" height="9" fill="#f4f4f4"/>
  <text x="73" y="48" font-family="Liberation Sans" font-size="8.5" fill="#707070" textLength="45" lengthAdjust="spacingAndGlyphs">HTML<tspan fill="#e09050">2P</tspan>DF</text>
  <rect x="0" y="74" width="185" height="16" fill="url(#pdfbar)"/>
  <circle cx="140" cy="82" r="5" fill="none" stroke="#eee" stroke-width="1.5"/>
  <text x="152" y="86" font-family="Liberation Sans" font-size="10" fill="#ddd">42m</text>
 </svg>
 <svg class="a" style="left:570px;top:307px" width="26" height="25"><rect width="26" height="25" rx="2" fill="#3a3434"/><text x="2" y="17" font-family="Liberation Sans" font-weight="bold" font-size="11" fill="#e8e8e8">PHP</text></svg>
 <!-- texts -->
 <div class="a ptxt" style="left:140px">Dans ce tutoriel vidéo vous apprendrez<br>comment configurer votre premier<br>serveur linux</div>
 <div class="a ptxt" style="left:357px">Dans ce tutoriel vidéo vous apprendrez<br>à utiliser le sélecteur CSS :nth-child<br>pour styliser des</div>
 <div class="a ptxt" style="left:573px">Dans ce tutoriel vidéo vous apprendrez<br><span style="letter-spacing:-0.29px">à générer des PDF en PHP avec la classe</span><br>HTML2PDF. Afin</div>
 <!-- sidebar -->
 <div class="a" style="left:787.5px;top:228.5px;width:54px;height:57px;background:#f6ecdc;border:1px solid #efe4d2"></div>
 <svg class="a" style="left:792px;top:234px" width="46" height="46" viewBox="0 0 46 46">
  <rect width="46" height="46" fill="#dcd6cc"/>
  <polygon points="1,9.8 22.6,0 45.3,9.4 44.3,33.5 22.6,44.5 1.8,33.5" fill="#111"/>
  <polygon points="2.6,10 22.6,1.6 43.5,9.4 22.6,18.1" fill="#4a4a4c"/>
  <polygon points="2.6,10.8 22,18.8 22,42.5 3.4,32.5" fill="#f6f6f6"/>
  <polygon points="23.2,18.8 43.6,10.2 42.8,32.5 23.2,42.5" fill="#a4cc36"/>
  <path d="M21.5,22.8 L10.8,18.6 L10.8,32 L19.5,35.8 L19.5,29.5 L15.5,28" fill="none" stroke="#111" stroke-width="3"/>
  <path d="M24.5,21.8 L37.5,16.6 M27.5,32 L36.5,28.4" fill="none" stroke="#111" stroke-width="3"/>
 </svg>
 <div class="a slink" style="top:232px">Administration</div>
 <div class="a slink" style="top:251px">Voir les nouveautés</div>
 <div class="a slink" style="top:270px">Voir mes sujets</div>
 <div class="a slink" style="top:289px">Editer mon profil</div>
 <div class="a slink" style="top:308px">Se déconnecter</div>
 <svg class="a" style="left:788px;top:364px" width="15" height="15"><rect width="15" height="15" rx="2" fill="#e8883a"/><circle cx="4" cy="11" r="1.6" fill="#fff"/><path d="M3,6 A6,6 0 0 1 9,12 M3,2.5 A9.5,9.5 0 0 1 12.5,12" fill="none" stroke="#fff" stroke-width="1.5"/></svg>
 <div class="a ptxt" style="left:805px;top:364px;color:#8a7c64">561 Abonnés</div>
 <svg class="a" style="left:885px;top:364px" width="15" height="15"><rect width="15" height="15" rx="2" fill="#5cc4e4"/><path d="M6,3 L6,11 Q6,12.5 8,12.5 L11,12.5 M6,6.5 L10.5,6.5" fill="none" stroke="#fff" stroke-width="2"/></svg>
 <div class="a ptxt" style="left:903px;top:364px;color:#8a7c64">2269 Abonnés</div>
</div></div>
<svg class="a" style="left:1122px;top:94px" width="14" height="294">
 <rect x="0" y="0" width="14" height="294" fill="#e6e6e6"/>
 <line x1="0.5" y1="0" x2="0.5" y2="294" stroke="#cfcfcf"/>
 <rect x="1.5" y="2.5" width="11" height="10" fill="#f2f2f2" stroke="#b8b8b8"/>
 <path d="M5,9 L7,6.5 L9,9" fill="none" stroke="#888" stroke-width="1"/>
 <rect x="1.5" y="13.5" width="11" height="73" rx="1" fill="#f0f0f0" stroke="#b4b4b4"/>
 <path d="M5,48 L9,48 M5,50 L9,50 M5,52 L9,52" stroke="#aaa" stroke-width="0.8"/>
 <rect x="1.5" y="277.5" width="11" height="11" fill="#f2f2f2" stroke="#b8b8b8"/>
 <path d="M5,281 L7,284 L9,281" fill="none" stroke="#888" stroke-width="1"/>
</svg>
<div id="rframe" class="a"></div>
<svg class="a" style="left:1136px;top:0" width="16" height="720">
 <defs><linearGradient id="rfr" x1="0" y1="0" x2="0" y2="1"><stop offset="0" stop-color="#b47ea8"/><stop offset="0.1" stop-color="#b888b0"/><stop offset="0.22" stop-color="#c4b8c2"/><stop offset="0.5" stop-color="#c4c4c4"/><stop offset="0.9" stop-color="#b0b0b0"/><stop offset="0.94" stop-color="#3a3a42"/><stop offset="1" stop-color="#202028"/></linearGradient></defs>
 <rect x="0" y="0" width="16" height="720" fill="url(#rfr)"/>
 <rect x="0" y="40" width="3" height="673" fill="#d8d8d8"/>
 <rect x="3" y="25" width="8" height="690" fill="#d4d4d4"/>
 <line x1="2.5" y1="25" x2="2.5" y2="715" stroke="#a8a8a8"/>
 <line x1="10.5" y1="25" x2="10.5" y2="715" stroke="#a0a0a0"/>
</svg>
<div id="status" class="a">En attente de googleads.g.doubleclick.net...</div>
<div id="dtbar" class="a"></div>
<div class="a" style="left:4px;top:389px;width:73px;height:29px;background:linear-gradient(#d2d2d2,#c2c2c2);border-right:1px solid #b0b0b0"></div>
<svg class="a" style="left:0;top:388px" width="600" height="30" viewBox="0 0 600 30">
 <!-- elements -->
 <rect x="11" y="7" width="18" height="17" rx="2" fill="#8cc43c" stroke="#6a9a2a"/>
 <path d="M16,12 L13,15 L16,18 M22,11 L19,20" fill="none" stroke="#fff" stroke-width="1.5"/>
 <circle cx="25" cy="21" r="4" fill="#e8c020"/>
 <!-- resources -->
 <rect x="86" y="7" width="17" height="17" rx="1.5" fill="#f4f4f4" stroke="#999"/>
 <rect x="88" y="14" width="11" height="7" fill="#2a6ad0"/>
 <!-- network -->
 <circle cx="176.5" cy="16" r="9.5" fill="#3a4a8a"/>
 <circle cx="176.5" cy="16" r="6.5" fill="#dde0ea"/>
 <circle cx="176.5" cy="16" r="4.5" fill="#2a2a30"/>
 <path d="M173,14 L180,14 L176.5,19 Z" fill="#8a9a70"/>
 <!-- scripts -->
 <rect x="241" y="6" width="14" height="18" fill="#f6f6f6" stroke="#aaa"/>
 <text x="242" y="13" font-family="Liberation Mono" font-size="6" fill="#3a8a3a">{}</text>
 <circle cx="254" cy="21" r="5" fill="#d02828"/>
 <!-- timeline -->
 <circle cx="313" cy="17" r="8" fill="#e8e8e8" stroke="#666" stroke-width="2"/>
 <path d="M313,17 L313,12 M313,17 L317,19" stroke="#555" stroke-width="1.3"/>
 <path d="M317,5 L324,5 L324,13 L320,11 Z" fill="#d02020"/>
 <path d="M320,22 L325,28" stroke="#555" stroke-width="2"/>
 <!-- profiles -->
 <circle cx="383" cy="16" r="8" fill="#f0f0f0" stroke="#777" stroke-width="1.8"/>
 <rect x="384" y="14" width="9" height="10" fill="#e8e0a0" stroke="#aaa" stroke-width="0.8"/>
 <!-- audits -->
 <circle cx="450" cy="13" r="6.5" fill="#eef4f8" stroke="#555" stroke-width="1.8"/>
 <path d="M455,18 L461,24" stroke="#222" stroke-width="3" stroke-linecap="round"/>
 <rect x="443" y="21" width="12" height="4" fill="#c8c8c8"/>
 <!-- console -->
 <rect x="505" y="7" width="19" height="18" fill="#e4e4e4" stroke="#888"/>
 <rect x="507" y="9" width="8" height="6" fill="#a0c0f0"/>
 <path d="M510,24 L516,13 L522,24 Z" fill="#f0c020"/>
 <rect x="515" y="12" width="8" height="7" fill="#e03a2a"/>
</svg>
<div class="a dtl" style="left:34px">Elements</div>
<div class="a dtl" style="left:108px">Resources</div>
<div class="a dtl" style="left:190px">Network</div>
<div class="a dtl" style="left:262px">Scripts</div>
<div class="a dtl" style="left:328px">Timeline</div>
<div class="a dtl" style="left:397px">Profiles</div>
<div class="a dtl" style="left:465px">Audits</div>
<div class="a dtl" style="left:527px">Console</div>
<div class="a" style="left:918px;top:395px;width:184px;height:17px;background:#fff;border:1px solid #a4a4a4;border-radius:1px"></div>
<svg class="a" style="left:922px;top:397px" width="14" height="14"><circle cx="6" cy="6" r="3.5" fill="none" stroke="#3a4a7a" stroke-width="1.6"/><path d="M8.5,8.5 L11.5,11.5" stroke="#3a4a7a" stroke-width="2"/></svg>
<div class="a ui" style="left:936px;top:398.5px;font-size:10px;color:#b4b4b8;-webkit-text-stroke:0">Search Elements</div>
<svg class="a" style="left:1111px;top:396px" width="15" height="15"><circle cx="7.5" cy="7.5" r="6.5" fill="#b8b8b8"/><path d="M5,5 L10,10 M10,5 L5,10" stroke="#f0f0f0" stroke-width="1.8"/></svg>

<div id="elements" class="a"></div>
<div class="a" style="left:4px;top:462px;width:607px;height:13px;background:#d4d4d4"></div>
<div class="a mono el" style="top:422.3px;left:21px;color:#c0c0c0">&lt;!DOCTYPE html&gt;</div>
<div class="a mono el" style="top:435.8px;left:10px"><span class="tri td"></span><span class="tg">&lt;html&gt;</span></div>
<div class="a mono el" style="top:449.4px;left:21px"><span class="tri tr"></span><span class="tg">&lt;head&gt;</span>…<span class="tg">&lt;/head&gt;</span></div>
<div class="a mono el" style="top:462.9px;left:21px"><span class="tri td"></span><span class="tg">&lt;body&gt;</span></div>
<div class="a mono el" style="top:476.4px;left:32px"><span class="tri tr"></span><span class="tg">&lt;div</span> <span class="an">id</span><span class="tg">="</span><span class="av">head</span><span class="tg">"&gt;</span>…<span class="tg">&lt;/div&gt;</span></div>
<div class="a mono el" style="top:489.9px;left:32px"><span class="tri tr"></span><span class="tg">&lt;div</span> <span class="an">id</span><span class="tg">="</span><span class="av">content</span><span class="tg">"</span> <span class="an">class</span><span class="tg">="</span><span class="av">wrapper</span><span class="tg">"&gt;</span>…<span class="tg">&lt;/div&gt;</span></div>
<div class="a mono el" style="top:503.5px;left:42px"><span class="tg">&lt;script</span> <span class="an">type</span><span class="tg">="</span><span class="av">text/javascript</span><span class="tg">"</span> <span class="an">src</span><span class="tg">="</span><span class="lk">/js/jquery.js</span><span class="tg">"&gt;&lt;/script&gt;</span></div>
<div class="a mono el" style="top:517.0px;left:42px"><span class="tg">&lt;script</span> <span class="an">type</span><span class="tg">="</span><span class="av">text/javascript</span><span class="tg">"</span> <span class="an">src</span><span class="tg">="</span><span class="lk">/js/main.js</span><span class="tg">"&gt;&lt;/script&gt;</span></div>
<div class="a mono el" style="top:530.5px;left:32px"><span class="tg">&lt;/body&gt;</span></div>
<div class="a mono el" style="top:544.1px;left:21px"><span class="tg">&lt;/html&gt;</span></div>
<div class="a mono el" style="top:557.6px;left:21px;color:#236e25">&lt;!-- Cached Render Time: 0.4703s --&gt;</div>

<div id="sidebar" class="a"></div>
<div class="a shdr" style="top:419px"><span class="stri">▶</span>Computed Style</div>
<div class="a shdr" style="top:436px"><span class="stri">▼</span>Styles</div>
<div class="a" style="left:1035px;top:420px;width:11px;height:11px;background:#fff;border:1px solid #b8b8b8"></div>
<div class="a ui" style="left:1048px;top:421px;font-size:11.3px;color:#8a8a8a">Show inherited</div>
<svg class="a" style="left:1097px;top:437px" width="22" height="14"><g transform="translate(7.75 7)"><circle r="3.6" fill="none" stroke="#555" stroke-width="2.6"/><g fill="#555"><rect x="-1.2" y="-5.2" width="2.4" height="2.2"/><rect x="-1.2" y="3" width="2.4" height="2.2"/><rect x="-5.2" y="-1.2" width="2.2" height="2.4"/><rect x="3" y="-1.2" width="2.2" height="2.4"/><g transform="rotate(45)"><rect x="-1.2" y="-5.2" width="2.4" height="2.2"/><rect x="-1.2" y="3" width="2.4" height="2.2"/><rect x="-5.2" y="-1.2" width="2.2" height="2.4"/><rect x="3" y="-1.2" width="2.2" height="2.4"/></g></g></g><path d="M14.5,6 L18,6 L16.25,8.5 Z" fill="#555"/></svg>
<div class="a mono sl" style="top:456.3px">element.style {</div>
<div class="a mono sl" style="top:484.3px">}</div>
<div class="a" style="left:612px;top:500px;width:510px;height:15px;background:linear-gradient(#e2e2e2,#d8d8d8);border-top:1px solid #c8c8c8;border-bottom:1px solid #c8c8c8"></div>
<div class="a ui" style="left:617px;top:503px;font-size:9.5px;color:#8e8e8e">Matched CSS Rules</div>
<div class="a mono sl" style="top:517.3px">body {</div>
<div class="a mono sl2" style="top:517.3px;left:1038px;width:82px;text-align:right;color:#6a6a6a;text-decoration:underline">style.css:140</div>
<div class="a mono sl" style="top:531.3px;left:624px"><span class="stri2">▶</span><span class="pn">background</span>: url(<span style="color:#2c2c8a">img/bg.jpg</span>) repeat center top;</div>
<div class="a mono sl" style="top:544.3px;left:634px"><span class="pn">color</span>: <span style="display:inline-block;width:9px;height:9px;background:#72654D;border:1px solid #4a4030;vertical-align:-1px;margin-right:2px"></span>#72654D;</div>
<div class="a mono sl" style="top:557.3px">}</div>
<div class="a" style="left:612px;top:572px;width:510px;height:1px;background:#d0d0d0"></div>
<div class="a mono sl" style="top:576.3px">body {</div>
<div class="a mono sl2" style="top:576.3px;left:1038px;width:82px;text-align:right;color:#6a6a6a;text-decoration:underline">style.css:23</div>
<div class="a mono sl" style="top:590.3px;left:634px"><span class="pn">font</span>: normal 13px/1 Candara, Arial, Helvetica, Garuda, sans-serif;</div>
<div class="a mono sl" style="top:603.3px;left:624px"><span class="stri2">▶</span><span class="pn">margin</span>: 0;</div>
<div class="a mono sl" style="top:616.3px;left:624px"><span class="stri2">▶</span><span class="pn">padding</span>: 0;</div>
<div class="a mono sl" style="top:629.3px;left:634px"><span class="pn">line-height</span>: 1.4em;</div>
<div class="a mono sl" style="top:641.3px;left:634px"><span class="pn">letter-spacing</span>: 0px;</div>
<div class="a mono sl" style="top:654.3px">}</div>
<div class="a" style="left:612px;top:668px;width:510px;height:24px;background:#f2f2f2;border-top:1px solid #d0d0d0"></div>
<div class="a mono sl" style="top:672.3px">body {</div>
<div class="a mono sl2" style="top:672.3px;left:960px;width:160px;text-align:right;color:#777">user agent stylesheet</div>
<div class="a mono sl" style="top:685.3px;left:634px"><span class="pn">display</span>: block;</div>

<svg class="a" style="left:1122px;top:418px" width="14" height="274">
 <rect x="0" y="0" width="14" height="274" fill="#e8e8e8"/>
 <line x1="0.5" y1="0" x2="0.5" y2="274" stroke="#cfcfcf"/>
 <rect x="1.5" y="2.5" width="11" height="11" fill="#f2f2f2" stroke="#b8b8b8"/>
 <path d="M5,9.5 L7,7 L9,9.5" fill="none" stroke="#888" stroke-width="1"/>
 <rect x="1.5" y="14.5" width="11" height="244" rx="1" fill="#efefef" stroke="#b8b8b8"/>
 <path d="M5,83 L9,83 M5,85 L9,85 M5,87 L9,87" stroke="#aaa" stroke-width="0.8"/>
 <rect x="1.5" y="259.5" width="11" height="11" fill="#f2f2f2" stroke="#b8b8b8"/>
 <path d="M5,263 L7,266 L9,263" fill="none" stroke="#888" stroke-width="1"/>
</svg>
<div id="dstatus" class="a"></div>
<svg class="a" style="left:4px;top:692px" width="160" height="22">
 <rect x="9" y="7" width="11" height="8" fill="none" stroke="#333" stroke-width="1.6"/>
 <path d="M7,10 L7,17 L17,17" fill="none" stroke="#333" stroke-width="1.6"/>
 <line x1="27.5" y1="1" x2="27.5" y2="21" stroke="#c8c8c8"/>
 <path d="M34,7 L38,11 L34,15" fill="none" stroke="#333" stroke-width="1.6"/>
 <path d="M39,7 L46,7 M40,11 L46,11 M39,15 L46,15" stroke="#333" stroke-width="1.6"/>
 <line x1="55.5" y1="1" x2="55.5" y2="21" stroke="#c8c8c8"/>
 <circle cx="67" cy="10" r="3.5" fill="none" stroke="#333" stroke-width="1.8"/>
 <path d="M69.5,12.5 L72.5,15.5" stroke="#333" stroke-width="2.2"/>
 <line x1="83.5" y1="1" x2="83.5" y2="21" stroke="#c8c8c8"/>
 <rect x="118" y="1" width="36" height="21" fill="#3a7ad6"/>
</svg>
<div class="a ui" style="left:94px;top:698px;font-size:10px;color:#333;letter-spacing:-0.3px">html</div>
<div class="a ui" style="left:128px;top:698px;font-size:10px;color:#e8f0ff">body</div>
<svg class="a" style="left:1100px;top:697px" width="22" height="12"><circle cx="6" cy="6" r="5" fill="#d83a3a"/><path d="M4,4 L8,8 M8,4 L4,8" stroke="#fff" stroke-width="1.3"/><text x="12" y="9" font-family="Liberation Sans" font-size="8" fill="#333">4</text></svg>

<div id="bottom" class="a"></div>
</div></body></html>
